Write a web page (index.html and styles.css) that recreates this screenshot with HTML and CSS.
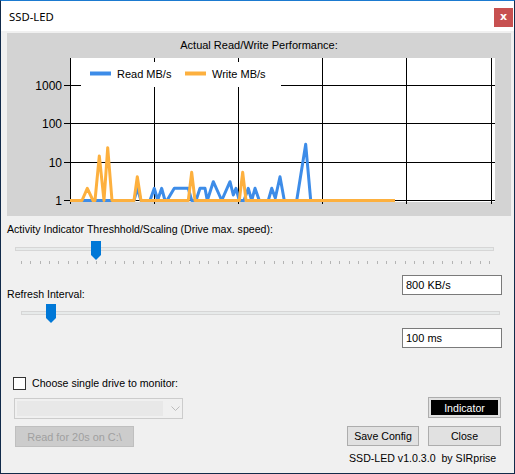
FILE: index.html
```html
<!DOCTYPE html>
<html>
<head>
<meta charset="utf-8">
<link rel="stylesheet" href="styles.css">
</head>
<body>
<div class="window">
  <div class="titlebar">
    <span class="title">SSD-LED</span>
    <span class="close">x</span>
  </div>
  <div class="client">
    <div class="chart">
      <svg class="chart-svg" width="504" height="183" viewBox="0 0 504 183">
        <text class="chart-title" x="252" y="16.3" text-anchor="middle">Actual Read/Write Performance:</text>
        <rect x="63" y="25" width="425" height="144" fill="#fff"/>
        <g stroke="#000" stroke-width="1" fill="none">
          <path d="M57 52.5H488M57 90.5H488M57 129.5H488M57 167.5H488"/>
          <path d="M63.5 25V171M147.5 25V171M231.5 25V171M315.5 25V171M399.5 25V171M484.5 25V171"/>
        </g>
        <g class="axis-labels" text-anchor="end">
          <text x="55" y="57">1000</text>
          <text x="55" y="95">100</text>
          <text x="55" y="134">10</text>
          <text x="55" y="172">1</text>
        </g>
        <polyline fill="none" stroke="#3d8ce8" stroke-width="3" stroke-linejoin="round" points="65,167.5 127,167.5 130.3,155.3 134,167.5 143,167.5 147.3,155.3 150.7,167 154.7,155.3 158,167.5 160,167.5 167.3,155.3 181.3,155.3 184.7,167.5 189,167.5 193,155.3 198,155.3 200.3,167.5 206.3,148.7 212.3,162 214.7,167.5 223,148.7 226.3,162 229,155.3 232.3,167.5 237,167.5 241.3,155.3 244.7,167.5 248,155.3 252.3,167.5 261.3,167.5 264.7,155.3 268.3,165 273,143.7 277.3,167.5 289.7,167.5 298.7,111.3 303.7,167.5"/>
        <polyline fill="none" stroke="#fdb03e" stroke-width="3" stroke-linejoin="round" points="63,167.5 75,167.5 80.3,155.3 86,167.5 88,167.5 92.3,123 97,167.5 100.7,114.7 105,167.5 127,167.5 130.3,143.7 134,167.5 181.3,167.5 184.7,139.3 188,167.5 232.3,167.5 235.7,139.3 239,167.5 388,167.5"/>
        <rect x="74" y="29" width="200" height="25" fill="#fff"/>
        <line x1="83" y1="40.5" x2="104" y2="40.5" stroke="#3d8ce8" stroke-width="4"/>
        <text class="legend" x="110" y="45.3">Read MB/s</text>
        <line x1="178" y1="40.5" x2="199" y2="40.5" stroke="#fdb03e" stroke-width="4"/>
        <text class="legend" x="205" y="45.3">Write MB/s</text>
      </svg>
    </div>

    <div class="label lbl-threshold">Activity Indicator Threshhold/Scaling (Drive max. speed):</div>

    <div class="slider slider-1">
      <div class="track"></div>
      <div class="thumb"></div>
      <div class="ticks">
        <i></i><i></i><i></i><i></i><i></i><i></i><i></i><i></i><i></i><i></i>
        <i></i><i></i><i></i><i></i><i></i><i></i><i></i><i></i><i></i><i></i>
        <i></i><i></i><i></i><i></i><i></i><i></i><i></i><i></i><i></i><i></i>
        <i></i><i></i><i></i><i></i><i></i><i></i><i></i><i></i><i></i><i></i>
        <i></i><i></i><i></i><i></i><i></i><i></i><i></i><i></i><i></i><i></i>
        <i></i>
      </div>
    </div>

    <div class="row-speed">
      <div class="label lbl-refresh">Refresh Interval:</div>
      <div class="textbox">800 KB/s</div>
    </div>

    <div class="slider slider-2">
      <div class="track"></div>
      <div class="thumb"></div>
      <div class="ticks">
        <i></i><i></i><i></i><i></i><i></i><i></i><i></i><i></i><i></i><i></i>
        <i class="last"></i>
      </div>
    </div>

    <div class="row-interval">
      <div class="textbox">100 ms</div>
    </div>

    <div class="lower">
      <div class="lower-left">
        <div class="check-row">
          <span class="checkbox"></span>
          <span class="label">Choose single drive to monitor:</span>
        </div>
        <div class="combo">
          <span class="combo-edit"></span>
          <svg class="combo-arrow" width="9" height="5" viewBox="0 0 9 5"><path d="M0.5 0.5L4.5 4.5L8.5 0.5" fill="none" stroke="#bcbcbc" stroke-width="1"/></svg>
        </div>
        <div class="btn btn-disabled">Read for 20s on C:\</div>
      </div>
      <div class="lower-right">
        <div class="indicator"><span>Indicator</span></div>
        <div class="btn-row">
          <div class="btn btn-save">Save Config</div>
          <div class="btn btn-close">Close</div>
        </div>
        <div class="footer">SSD-LED v1.0.3.0&nbsp; by SIRprise</div>
      </div>
    </div>
  </div>
</div>
</body>
</html>
```

FILE: styles.css
```css
* { box-sizing: border-box; }
html, body { margin: 0; padding: 0; background: #f0f0f0; }
body { font-family: "Liberation Sans", Arial, sans-serif; font-size: 10.6px; color: #000; }

.window {
  width: 515px;
  height: 474px;
  border: 1px solid #112a4a;
  border-top-color: #1b7ad0;
  background: #f0f0f0;
  display: flex;
  flex-direction: column;
}

.titlebar {
  height: 30px;
  background: #fff;
  display: flex;
  align-items: center;
  padding-left: 8px;
}
.title {
  font-family: "Noto Sans", "Open Sans", sans-serif;
  font-size: 11.3px;
  color: #000;
}
.close {
  margin-left: auto;
  margin-right: 1px;
  align-self: flex-start;
  margin-top: 7px;
  width: 19px;
  height: 19px;
  background: #c75050;
  color: #fff;
  font-family: "DejaVu Sans", sans-serif;
  font-weight: bold;
  font-size: 11px;
  line-height: 18px;
  text-align: center;
}

.client {
  flex: 1;
  display: flow-root;
  background: #f0f0f0;
}

.chart {
  margin: 2px 0 0 6px;
  width: 504px;
  height: 183px;
  background: #d3d3d3;
}
.chart-svg { display: block; }
.chart-title { font-family: "Liberation Sans", Arial, sans-serif; font-size: 11px; fill: #000; }
.axis-labels text { font-family: "Liberation Sans", Arial, sans-serif; font-size: 12px; fill: #000; }
.legend { font-family: "Liberation Sans", Arial, sans-serif; font-size: 11px; fill: #000; }

.label { line-height: 13px; white-space: nowrap; }
.lbl-threshold { margin: 7px 0 0 6px; }

.slider { position: relative; display: flow-root; }
.slider .track {
  height: 4px;
  width: 479px;
  background: #e7eaea;
  border: 1px solid #d6d6d6;
}
.slider .thumb {
  position: absolute;
  width: 10px;
  height: 19px;
  background: #0078d7;
  clip-path: polygon(0 0, 100% 0, 100% 74%, 50% 100%, 0 74%);
}
.slider .ticks {
  display: flex;
  height: 4px;
}
.slider .ticks i {
  display: block;
  width: 1px;
  height: 4px;
  background: #b4b4b4;
}

.slider-1 { height: 29px; padding-top: 11px; }
.slider-1 .track { margin-left: 14px; }
.slider-1 .thumb { left: 90px; top: 5px; }
.slider-1 .ticks {
  margin: 10px 0 0 20px;
  width: 469px;
  justify-content: space-between;
  height: 3px;
}
.slider-1 .ticks i { height: 3px; }

.row-speed {
  margin-top: 10px;
  height: 26px;
  display: flex;
  justify-content: space-between;
  padding: 0 12px 0 6px;
}
.lbl-refresh { align-self: flex-end; }

.textbox {
  width: 100px;
  height: 20px;
  background: #fff;
  border: 1px solid #7a7a7a;
  padding: 3px 0 0 3px;
  font-size: 11px;
  line-height: 13px;
  align-self: flex-start;
}

.slider-2 { padding-top: 10px; }
.slider-2 .track { margin-left: 20px; }
.slider-2 .thumb { left: 45px; top: 3px; }
.slider-2 .ticks {
  margin: 9px 0 0 25px;
  width: 469px;
  gap: 48.3px;
}
.slider-2 .ticks .last { margin-left: auto; }

.row-interval {
  display: flex;
  justify-content: flex-end;
  padding-right: 12px;
}

.lower {
  display: flex;
  justify-content: space-between;
}
.lower-left {
  display: flex;
  flex-direction: column;
  align-items: flex-start;
  padding-left: 12px;
}
.check-row {
  margin-top: 29px;
  display: flex;
  align-items: center;
  height: 13px;
  gap: 6px;
}
.checkbox {
  width: 13px;
  height: 13px;
  border: 1px solid #333;
  background: #fff;
}
.combo {
  margin: 8px 0 0 1px;
  width: 169px;
  height: 21px;
  border: 1px solid #cccccc;
  background: #f0f0f0;
  display: flex;
  align-items: center;
  padding: 2px;
}
.combo-edit {
  width: 146px;
  height: 15px;
  background: #e8e8e8;
}
.combo-arrow { margin-left: 8px; }

.btn {
  height: 20px;
  border: 1px solid #adadad;
  background: #e1e1e1;
  display: flex;
  align-items: center;
  justify-content: center;
  white-space: nowrap;
}
.btn-disabled {
  margin: 7px 0 0 2px;
  width: 119px;
  height: 21px;
  background: #cccccc;
  border-color: #bfbfbf;
  color: #a0a0a0;
  font-size: 10.9px;
}

.lower-right {
  display: flex;
  flex-direction: column;
  align-items: flex-end;
  padding-right: 13px;
}
.indicator {
  margin-top: 49px;
  width: 73px;
  height: 21px;
  border: 1px solid #adadad;
  background: #e1e1e1;
  padding: 2px;
}
.indicator span {
  display: flex;
  height: 100%;
  background: #000;
  color: #fff;
  align-items: center;
  justify-content: center;
}
.btn-row {
  margin-top: 8px;
  display: flex;
  gap: 9px;
}
.btn-save { width: 72px; }
.btn-close { width: 73px; }
.footer {
  align-self: flex-start;
  margin: 6px 0 0 2px;
  line-height: 13px;
  white-space: nowrap;
}
```
